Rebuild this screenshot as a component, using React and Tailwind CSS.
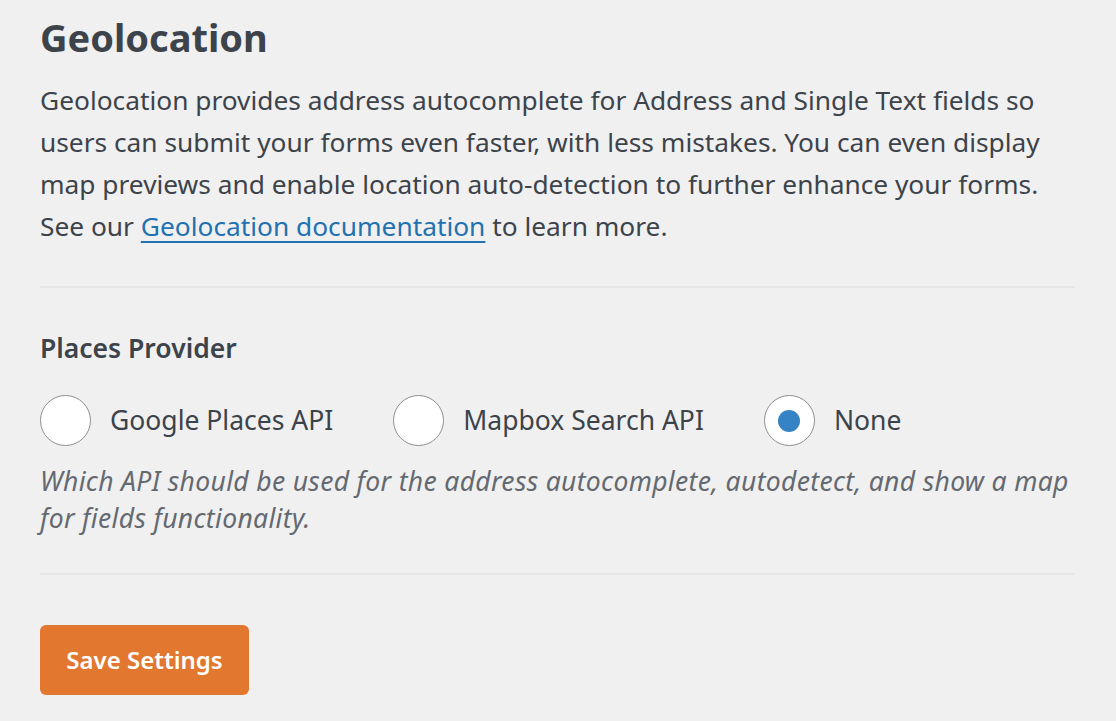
import React, { useState } from "react";

const options = ["Google Places API", "Mapbox Search API", "None"];

function Radio({ label, checked, onChange }) {
  return (
    <label className="flex items-center gap-[19px] cursor-pointer">
      <span className="w-[51px] h-[51px] rounded-full bg-white border border-[#8c8f94] flex items-center justify-center">
        {checked && <span className="w-[22px] h-[22px] rounded-full bg-[#3582c4]" />}
      </span>
      <input type="radio" className="hidden" checked={checked} onChange={onChange} />
      <span>{label}</span>
    </label>
  );
}

export default function App() {
  const [provider, setProvider] = useState("None");

  return (
    <div className="min-h-screen bg-[#f0f0f1] text-[#3c434a] font-['Noto_Sans','Open_Sans',sans-serif] px-[40px] pt-[13px]">
      <div className="w-[1035px]">
        {/* Header */}
        <h1 className="text-[38px] font-bold leading-[48px] text-[#3c434a]">Geolocation</h1>
        <p className="mt-[18px] text-[26.3px] leading-[42px] whitespace-nowrap">
          Geolocation provides address autocomplete for Address and Single Text fields so
          <br />
          users can submit your forms even faster, with less mistakes. You can even display
          <br />
          map previews and enable location auto-detection to further enhance your forms.
          <br />
          See our{" "}
          <a href="#" className="text-[#2271b1] underline underline-offset-[5px]">
            Geolocation documentation
          </a>{" "}
          to learn more.
        </p>

        <div className="mt-[39px] border-t-2 border-[#e6e6e6]" />

        {/* Places Provider */}
        <div className="pt-[42px] pb-[36px] text-[26.5px]">
          <div className="font-semibold leading-[36px]">Places Provider</div>
          <div className="mt-[29px] flex items-center gap-[60px]">
            {options.map((o) => (
              <Radio key={o} label={o} checked={provider === o} onChange={() => setProvider(o)} />
            ))}
          </div>
          <p className="mt-[17px] italic text-[#646970] leading-[37px] tracking-[0.33px] whitespace-nowrap">
            Which API should be used for the address autocomplete, autodetect, and show a map
            <br />
            for fields functionality.
          </p>
        </div>

        <div className="border-t-2 border-[#e6e6e6]" />

        <button className="mt-[50px] w-[209px] h-[70px] rounded-[6px] bg-[#e27730] text-white text-[24px] font-semibold">
          Save Settings
        </button>
      </div>
    </div>
  );
}
